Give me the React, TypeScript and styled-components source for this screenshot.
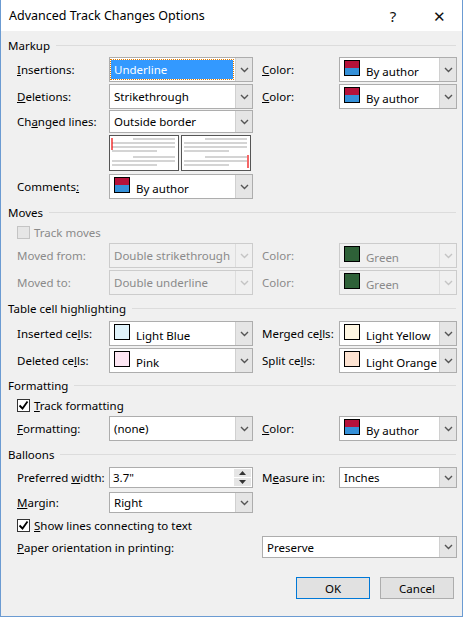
import React from 'react';
import styled, { createGlobalStyle } from 'styled-components';

const Global = createGlobalStyle`
	body { margin: 0; background: #fff; }
	* { box-sizing: border-box; }
`;

const Window = styled.div`
	width: 463px;
	height: 617px;
	border: 1px solid #6b9bd2;
	border-top: none;
	background: #f0f0f0;
	font-family: 'Noto Sans', 'Open Sans', sans-serif;
	font-size: 11.5px;
	color: #000;
	display: flex;
	flex-direction: column;
	overflow: hidden;
`;
const TitleBar = styled.div`
	height: 31px;
	background: #fff;
	display: flex;
	align-items: center;
	padding-left: 8px;
	font-size: 12.5px;
`;
const TitleText = styled.div`
	flex: 1;
`;
const TitleButton = styled.div`
	width: 46px;
	text-align: center;
	font-size: 15px;
	color: #111;
`;
const Header = styled.div<{ $mt: number }>`
	margin-top: ${(p) => p.$mt}px;
	height: 16px;
	display: flex;
	align-items: center;
	padding-left: 7px;
	padding-right: 6px;
	gap: 6px;
	&::after {
		content: '';
		flex: 1;
		height: 1px;
		background: #dcdcdc;
	}
`;
const Row = styled.div<{ $mt: number; $h?: number }>`
	margin-top: ${(p) => p.$mt}px;
	height: ${(p) => p.$h ?? 23}px;
	padding-left: 16px;
	display: grid;
	grid-template-columns: 92px 144px 9px 77px 118px;
	align-items: center;
`;
const Label = styled.div<{ $disabled?: boolean; $col?: number }>`
	color: ${(p) => (p.$disabled ? '#8a8a8a' : '#000')};
	grid-column: ${(p) => p.$col ?? 1};
	white-space: nowrap;
`;
const ComboBox = styled.div<{ $disabled?: boolean; $col?: number; $span?: number }>`
	grid-column: ${(p) => `${p.$col ?? 2} / span ${p.$span ?? 1}`};
	height: 100%;
	display: flex;
	min-width: 0;
	border: 1px solid ${(p) => (p.$disabled ? '#cccccc' : '#adadad')};
	background: ${(p) => (p.$disabled ? '#f0f0f0' : '#fff')};
	color: ${(p) => (p.$disabled ? '#8a8a8a' : '#000')};
`;
const ComboText = styled.div<{ $selected?: boolean }>`
	flex: 1;
	min-width: 0;
	display: flex;
	align-items: center;
	padding-left: 3px;
	margin: 2px 2px 2px 1px;
	white-space: nowrap;
	overflow: hidden;
	${(p) =>
		p.$selected &&
		'background:#3399ff;color:#fff;outline:1px dotted #e07b00;'}
`;
const ArrowBox = styled.div<{ $disabled?: boolean }>`
	width: 17px;
	flex: none;
	display: flex;
	align-items: center;
	justify-content: center;
	background: ${(p) => (p.$disabled ? '#f0f0f0' : '#e5e5e5')};
	border-left: 1px solid ${(p) => (p.$disabled ? '#dddddd' : '#d0d0d0')};
`;
const Swatch = styled.span<{ $top: string; $bottom: string }>`
	width: 16px;
	height: 16px;
	border: 1px solid #000;
	background: linear-gradient(${(p) => p.$top} 50%, ${(p) => p.$bottom} 50%);
	margin-right: 6px;
	flex: none;
	align-self: flex-start;
`;
const SwatchLabel = styled.span`
	padding-top: 4px;
`;
const CheckRow = styled.label<{ $mt: number; $disabled?: boolean }>`
	margin-top: ${(p) => p.$mt}px;
	height: 16px;
	padding-left: 16px;
	display: flex;
	align-items: center;
	gap: 4px;
	color: ${(p) => (p.$disabled ? '#8a8a8a' : '#000')};
`;
const CheckBox = styled.span<{ $disabled?: boolean }>`
	width: 13px;
	height: 13px;
	border: 1px solid ${(p) => (p.$disabled ? '#c4c4c4' : '#333')};
	background: ${(p) => (p.$disabled ? '#e6e6e6' : '#fff')};
	display: flex;
	align-items: center;
	justify-content: center;
`;
const Preview = styled.div`
	grid-column: 2;
	height: 100%;
`;
const SpinBox = styled.div`
	grid-column: 2;
	height: 100%;
	border: 1px solid #adadad;
	background: #fff;
	display: flex;
`;
const SpinText = styled.div`
	flex: 1;
	padding-left: 3px;
	display: flex;
	align-items: center;
`;
const SpinButtons = styled.div`
	width: 17px;
	display: flex;
	flex-direction: column;
	margin: 1px;
	gap: 1px;
`;
const SpinButton = styled.div`
	flex: 1;
	background: #e5e5e5;
	display: flex;
	align-items: center;
	justify-content: center;
`;
const Footer = styled.div`
	margin-top: 19px;
	display: flex;
	justify-content: flex-end;
	gap: 10px;
	padding-right: 8px;
`;
const Button = styled.div<{ $default?: boolean }>`
	width: 74px;
	height: 22px;
	display: flex;
	align-items: center;
	justify-content: center;
	background: #e1e1e1;
	border: 1px solid ${(p) => (p.$default ? '#0078d7' : '#adadad')};
`;

function Chevron({ disabled }: { disabled?: boolean }) {
	return (
		<svg width="9" height="6" viewBox="0 0 9 6">
			<path d="M1 1l3.5 3.5L8 1" fill="none" stroke={disabled ? '#c4c4c4' : '#555'} strokeWidth="1.4" />
		</svg>
	);
}

function Tick() {
	return (
		<svg width="11" height="11" viewBox="0 0 11 11">
			<path d="M1.5 5.5l3 3L9.5 1.5" fill="none" stroke="#000" strokeWidth="1.8" />
		</svg>
	);
}

function Combo(props: {
	text: React.ReactNode;
	col?: number;
	span?: number;
	disabled?: boolean;
	selected?: boolean;
	swatch?: [string, string];
}) {
	return (
		<ComboBox $col={props.col} $span={props.span} $disabled={props.disabled}>
			<ComboText $selected={props.selected}>
				{props.swatch ? (
					<>
						<Swatch $top={props.swatch[0]} $bottom={props.swatch[1]} />
						<SwatchLabel>{props.text}</SwatchLabel>
					</>
				) : (
					props.text
				)}
			</ComboText>
			<ArrowBox $disabled={props.disabled}>
				<Chevron disabled={props.disabled} />
			</ArrowBox>
		</ComboBox>
	);
}

const AUTHOR: [string, string] = ['#b5123a', '#3590d8'];
const GREEN: [string, string] = ['#2e6138', '#2e6138'];

function Lines({ x }: { x: number }) {
	const w = 69;
	return (
		<g>
			<rect x={x + 0.5} y={0.5} width={w} height={35} fill="#fff" stroke="#555" />
			{[4, 8, 12, 16, 22, 26, 30].map((y, i) => (
				<line
					key={y}
					x1={x + (i === 0 || i === 4 ? 24 : 3)}
					x2={x + (i === 3 || i === 6 ? 48 : w - 3)}
					y1={y}
					y2={y}
					stroke="#a9a9a9"
				/>
			))}
		</g>
	);
}

export default function App() {
	return (
		<Window>
			<Global />
			<TitleBar>
				<TitleText>Advanced Track Changes Options</TitleText>
				<TitleButton>?</TitleButton>
				<TitleButton>✕</TitleButton>
			</TitleBar>

			<Header $mt={6}>Markup</Header>
			<Row $mt={4}>
				<Label><u>I</u>nsertions:</Label>
				<Combo text="Underline" selected />
				<Label $col={4}><u>C</u>olor:</Label>
				<Combo col={5} text="By author" swatch={AUTHOR} />
			</Row>
			<Row $mt={4}>
				<Label><u>D</u>eletions:</Label>
				<Combo text="Strikethrough" />
				<Label $col={4}><u>C</u>olor:</Label>
				<Combo col={5} text="By author" swatch={AUTHOR} />
			</Row>
			<Row $mt={3}>
				<Label>Ch<u>a</u>nged lines:</Label>
				<Combo text="Outside border" />
			</Row>
			<Row $mt={2} $h={37}>
				<Preview>
					<svg width="144" height="37" viewBox="0 0 144 37">
						<Lines x={0} />
						<line x1={3} x2={3} y1={3} y2={15} stroke="#e00" strokeWidth="1.2" />
						<Lines x={72} />
						<line x1={139} x2={139} y1={20} y2={33} stroke="#e00" strokeWidth="1.2" />
					</svg>
				</Preview>
			</Row>
			<Row $mt={2}>
				<Label>Comments<u>:</u></Label>
				<Combo text="By author" swatch={AUTHOR} />
			</Row>

			<Header $mt={7}>Moves</Header>
			<CheckRow $mt={4} $disabled>
				<CheckBox $disabled />
				Track moves
			</CheckRow>
			<Row $mt={3}>
				<Label $disabled>Moved from:</Label>
				<Combo text="Double strikethrough" disabled />
				<Label $col={4} $disabled>Color:</Label>
				<Combo col={5} text="Green" swatch={GREEN} disabled />
			</Row>
			<Row $mt={4}>
				<Label $disabled>Moved to:</Label>
				<Combo text="Double underline" disabled />
				<Label $col={4} $disabled>Color:</Label>
				<Combo col={5} text="Green" swatch={GREEN} disabled />
			</Row>

			<Header $mt={7}>Table cell highlighting</Header>
			<Row $mt={5}>
				<Label>Inserted ce<u>l</u>ls:</Label>
				<Combo text="Light Blue" swatch={['#e0f3fb', '#e0f3fb']} />
				<Label $col={4}>Merged ce<u>l</u>ls:</Label>
				<Combo col={5} text="Light Yellow" swatch={['#fff7e3', '#fff7e3']} />
			</Row>
			<Row $mt={4}>
				<Label>Deleted ce<u>l</u>ls:</Label>
				<Combo text="Pink" swatch={['#fde6f3', '#fde6f3']} />
				<Label $col={4}>Split ce<u>l</u>ls:</Label>
				<Combo col={5} text="Light Orange" swatch={['#fde3d2', '#fde3d2']} />
			</Row>

			<Header $mt={6}>Formatting</Header>
			<CheckRow $mt={4}>
				<CheckBox><Tick /></CheckBox>
				<span><u>T</u>rack formatting</span>
			</CheckRow>
			<Row $mt={3}>
				<Label><u>F</u>ormatting:</Label>
				<Combo text="(none)" />
				<Label $col={4}><u>C</u>olor:</Label>
				<Combo col={5} text="By author" swatch={AUTHOR} />
			</Row>

			<Header $mt={7}>Balloons</Header>
			<Row $mt={5} $h={21}>
				<Label>Preferred <u>w</u>idth:</Label>
				<SpinBox>
					<SpinText>3.7"</SpinText>
					<SpinButtons>
						<SpinButton>
							<svg width="7" height="4" viewBox="0 0 7 4"><path d="M0 4L3.5 0 7 4z" fill="#333" /></svg>
						</SpinButton>
						<SpinButton>
							<svg width="7" height="4" viewBox="0 0 7 4"><path d="M0 0L3.5 4 7 0z" fill="#333" /></svg>
						</SpinButton>
					</SpinButtons>
				</SpinBox>
				<Label $col={4}>M<u>e</u>asure in:</Label>
				<Combo col={5} text="Inches" />
			</Row>
			<Row $mt={4} $h={21}>
				<Label><u>M</u>argin:</Label>
				<Combo text="Right" />
			</Row>
			<CheckRow $mt={4}>
				<CheckBox><Tick /></CheckBox>
				<span><u>S</u>how lines connecting to text</span>
			</CheckRow>
			<Row $mt={3} $h={22}>
				<Label><u>P</u>aper orientation in printing:</Label>
				<Combo col={4} span={2} text="Preserve" />
			</Row>

			<Footer>
				<Button $default>OK</Button>
				<Button>Cancel</Button>
			</Footer>
		</Window>
	);
}
